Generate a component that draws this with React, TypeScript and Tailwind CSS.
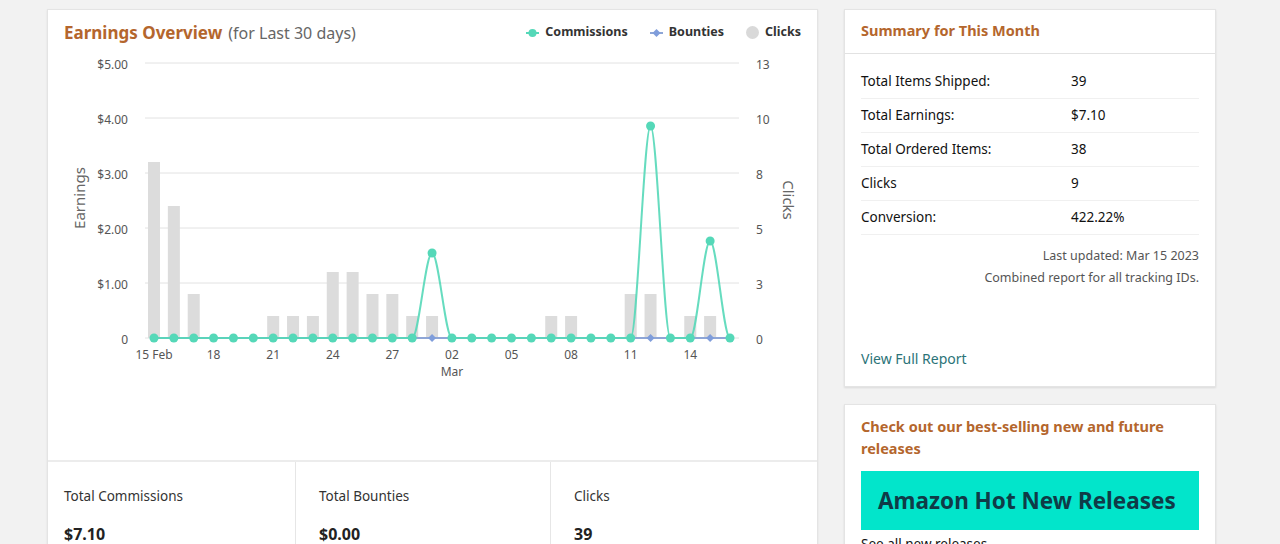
import React from "react";

const FONT = { fontFamily: '"Noto Sans", "Open Sans", Arial, sans-serif' };

const STEP = (729 - 153) / 29;
const px = (i: number) => 153 + i * STEP;
const BASE = 338;

// clicks per day (bars), 22px per click
const clicks: Record<number, number> = {
  0: 8, 1: 6, 2: 2, 6: 1, 7: 1, 8: 1, 9: 3, 10: 3, 11: 2, 12: 2, 13: 1, 14: 1, 20: 1, 21: 1, 24: 2, 25: 2, 27: 1, 28: 1,
};
// commission peaks, in px above the baseline
const peaks: Record<number, number> = { 14: 85, 25: 212, 28: 97 };
const bountyDays = [14, 25, 28];

const grid = [
  { y: 63, l: "$5.00", r: "13" },
  { y: 118, l: "$4.00", r: "10" },
  { y: 173, l: "$3.00", r: "8" },
  { y: 228, l: "$2.00", r: "5" },
  { y: 283, l: "$1.00", r: "3" },
  { y: 338, l: "0", r: "0" },
];

const xLabels = [
  { i: 0, t: "15 Feb" },
  { i: 3, t: "18" },
  { i: 6, t: "21" },
  { i: 9, t: "24" },
  { i: 12, t: "27" },
  { i: 15, t: "02" },
  { i: 18, t: "05" },
  { i: 21, t: "08" },
  { i: 24, t: "11" },
  { i: 27, t: "14" },
];

function commissionPath() {
  const pts = Array.from({ length: 30 }, (_, i) => [px(i), BASE - (peaks[i] ?? 0)]);
  let d = `M${pts[0][0]},${pts[0][1]}`;
  for (let i = 1; i < pts.length; i++) {
    const [x0, y0] = pts[i - 1];
    const [x1, y1] = pts[i];
    const dx = (x1 - x0) / 3;
    d += ` C${x0 + dx},${y0} ${x1 - dx},${y1} ${x1},${y1}`;
  }
  return d;
}

function Chart() {
  return (
    <svg width={771} height={409} viewBox="47 51 771 409" className="block" style={FONT}>
      {grid.map((g) => (
        <g key={g.y}>
          <line x1={144} x2={738} y1={g.y} y2={g.y} stroke="#e2e2e2" strokeWidth={1} />
          <text x={127} y={g.y + 6} textAnchor="end" fontSize={12} fill="#555">{g.l}</text>
          <text x={755} y={g.y + 6} fontSize={12} fill="#555">{g.r}</text>
        </g>
      ))}
      <text x={80} y={198} fontSize={15} fill="#666" textAnchor="middle" transform="rotate(-90 80 198)" dominantBaseline="middle">Earnings</text>
      <text x={786} y={200} fontSize={15} fill="#666" textAnchor="middle" transform="rotate(90 786 200)" dominantBaseline="middle">Clicks</text>

      {Object.entries(clicks).map(([k, v]) => (
        <rect key={k} x={px(+k) - 6} y={BASE - v * 22} width={12} height={v * 22} fill="#dcdcdc" />
      ))}

      <line x1={px(0)} x2={px(29)} y1={BASE} y2={BASE} stroke="#8ea6d6" strokeWidth={2} />
      <path d={commissionPath()} fill="none" stroke="#55d8b8" strokeWidth={2} strokeOpacity={0.9} />
      {Array.from({ length: 30 }, (_, i) => (
        <circle key={i} cx={px(i)} cy={BASE - (peaks[i] ?? 0)} r={4.5} fill="#55d8b8" />
      ))}
      {bountyDays.map((i) => (
        <path key={i} d={`M${px(i)},${BASE - 4} L${px(i) + 4},${BASE} L${px(i)},${BASE + 4} L${px(i) - 4},${BASE} Z`} fill="#7f9ddb" />
      ))}

      {xLabels.map((l) => (
        <text key={l.i} x={px(l.i)} y={359} textAnchor="middle" fontSize={12} fill="#555">{l.t}</text>
      ))}
      <text x={px(15)} y={376} textAnchor="middle" fontSize={12} fill="#555">Mar</text>
    </svg>
  );
}

function Legend() {
  return (
    <div className="flex items-center gap-[22px] text-[12.5px] font-bold text-[#333] -mt-[1px]">
      <div className="flex items-center gap-[6px]">
        <svg width={13} height={10}><line x1={0} x2={13} y1={5} y2={5} stroke="#55d8b8" strokeWidth={2} /><circle cx={6.5} cy={5} r={4} fill="#55d8b8" /></svg>
        <span>Commissions</span>
      </div>
      <div className="flex items-center gap-[6px]">
        <svg width={13} height={10}><line x1={0} x2={13} y1={5} y2={5} stroke="#8ea6d6" strokeWidth={2} /><path d="M6.5,1 L10.5,5 L6.5,9 L2.5,5 Z" fill="#7f9ddb" /></svg>
        <span>Bounties</span>
      </div>
      <div className="flex items-center gap-[6px]">
        <span className="w-[13px] h-[13px] rounded-full bg-[#d9d9d9]" />
        <span>Clicks</span>
      </div>
    </div>
  );
}

const summary = [
  ["Total Items Shipped:", "39"],
  ["Total Earnings:", "$7.10"],
  ["Total Ordered Items:", "38"],
  ["Clicks", "9"],
  ["Conversion:", "422.22%"],
];

const totals = [
  ["Total Commissions", "$7.10"],
  ["Total Bounties", "$0.00"],
  ["Clicks", "39"],
];

export default function App() {
  return (
    <div className="h-screen overflow-hidden bg-[#f2f2f2] flex items-start gap-[26px] pl-[47px] pt-[9px]" style={FONT}>
      <div className="w-[771px] bg-white border border-[#e4e4e4] shadow-[0_1px_2px_rgba(0,0,0,0.08)]">
        <div className="h-[41px] flex items-center justify-between px-[16px] pt-[5px]">
          <div className="flex items-baseline gap-[6px]">
            <span className="text-[17px] font-bold text-[#b4662d]">Earnings Overview</span>
            <span className="text-[16px] text-[#666]">(for Last 30 days)</span>
          </div>
          <Legend />
        </div>
        <Chart />
        <div className="border-t-2 border-[#ececec] grid grid-cols-[247px_255px_1fr] h-[90px]">
          {totals.map(([label, value], i) => (
            <div key={label} className={`pt-[24px] ${i > 0 ? "pl-[23px] border-l border-[#e6e6e6]" : "pl-[16px]"}`}>
              <div className="text-[13.5px] text-[#333]">{label}</div>
              <div className="mt-[20px] text-[16px] leading-[16px] font-bold text-[#222]">{value}</div>
            </div>
          ))}
        </div>
      </div>

      <div className="w-[372px] flex flex-col gap-[17px]">
        <div className="bg-white border border-[#e4e4e4] shadow-[0_1px_2px_rgba(0,0,0,0.1)]">
          <div className="h-[44px] flex items-center px-[16px] border-b border-[#e2e2e2]">
            <span className="text-[14.5px] font-bold text-[#b4662d] -mt-[2px]">Summary for This Month</span>
          </div>
          <div className="px-[16px] pt-[11px] pb-[17px]">
            {summary.map(([label, value]) => (
              <div key={label} className="h-[34px] flex items-center border-b border-[#f0f0f0] text-[13.5px] text-[#111]">
                <span className="w-[210px]">{label}</span>
                <span>{value}</span>
              </div>
            ))}
            <div className="text-right text-[12.5px] text-[#555] leading-[22px] mt-[10px]">
              <div>Last updated: Mar 15 2023</div>
              <div>Combined report for all tracking IDs.</div>
            </div>
            <div className="mt-[60px] text-[14px] text-[#2b7378] leading-[20px]">View Full Report</div>
          </div>
        </div>

        <div className="bg-white border border-[#e4e4e4] shadow-[0_1px_2px_rgba(0,0,0,0.1)] px-[16px] pt-[10px] pb-[16px]">
          <div className="text-[14.5px] font-bold text-[#b4662d] leading-[22px]">Check out our best-selling new and future releases</div>
          <div className="mt-[12px] h-[59px] bg-[#02e5cb] flex items-center pl-[17px]">
            <span className="text-[22.5px] font-bold text-[#0f3b47]">Amazon Hot New Releases</span>
          </div>
          <div className="mt-[4px] text-[13.5px] text-[#111]">See all new releases</div>
        </div>
      </div>
    </div>
  );
}
